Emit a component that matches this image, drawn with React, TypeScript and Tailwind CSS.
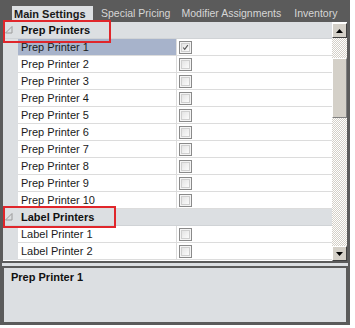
import React from "react";

const font = "font-['Liberation_Sans',Arial,sans-serif]";

function Checkbox({ checked }: { checked?: boolean }) {
  return (
    <div className="w-[13px] h-[13px] border border-[#8a8a8a] bg-[#f4f4f4] p-[1px]">
      <div className="w-full h-full border border-[#cfcfcf] bg-gradient-to-br from-[#e4e4e4] to-[#fbfbfb] relative">
        {checked && (
          <svg viewBox="0 0 9 9" className="absolute inset-0 w-full h-full">
            <path d="M1.5 4.5 L3.5 7 L7.5 1.5" fill="none" stroke="#555" strokeWidth="1.4" />
          </svg>
        )}
      </div>
    </div>
  );
}

function Header({ label }: { label: string }) {
  return (
    <div className="flex h-[17px] items-center bg-[#dcdfe2] border-b border-[#d0d3d6]">
      <svg width="8" height="8" viewBox="0 0 8 8" className="ml-[2px] mr-[8px]">
        <path d="M7 0.5 L7 7 L0.5 7 Z" fill="none" stroke="#9a9a9a" strokeWidth="1" />
      </svg>
      <span className="text-[11px] font-bold text-[#111]">{label}</span>
    </div>
  );
}

function Row({ label, selected, checked }: { label: string; selected?: boolean; checked?: boolean }) {
  return (
    <div className="flex h-[17px]">
      <div className="w-[15px] bg-[#dcdfe2]" />
      <div
        className={`w-[159px] border-r border-b border-[#dcdcdc] pl-[3px] flex items-center text-[11px] text-[#1a1a1a] ${
          selected ? "bg-[#a7b3cb]" : "bg-white"
        }`}
      >
        {label}
      </div>
      <div className="flex-1 bg-white border-b border-[#dcdcdc] flex items-center pl-[2px]">
        <Checkbox checked={checked} />
      </div>
    </div>
  );
}

function ScrollButton({ down }: { down?: boolean }) {
  return (
    <div className="w-[15px] h-[15px] bg-[#d4d0c8] border border-t-white border-l-white border-r-[#404040] border-b-[#404040] flex items-center justify-center">
      <svg width="7" height="4" viewBox="0 0 7 4">
        {down ? <path d="M0 0 L7 0 L3.5 4 Z" fill="#000" /> : <path d="M0 4 L7 4 L3.5 0 Z" fill="#000" />}
      </svg>
    </div>
  );
}

export default function App() {
  const checker =
    "bg-[repeating-conic-gradient(#d4d0c8_0_25%,#ffffff_0_50%)] bg-[length:2px_2px]";
  return (
    <div className={`${font} w-[355px] h-[328px] bg-white relative`}>
      <div className="w-[350px] h-[325px] bg-[#5b5b5b] flex flex-col">
        {/* Tabs */}
        <div className="h-[22px] flex items-end text-[10.5px] shrink-0">
          <div className="ml-[12px] h-[16px] w-[81px] bg-[#dcdfe2] pl-[2px] flex items-center font-bold text-[11px] text-[#1a1a1a]">
            Main Settings
          </div>
          <div className="ml-[8px] h-[16px] flex items-center text-[#d6d6d6]">Special Pricing</div>
          <div className="ml-[11px] h-[16px] flex items-center text-[#d6d6d6]">Modifier Assignments</div>
          <div className="ml-[13px] h-[16px] flex items-center text-[#d6d6d6]">Inventory</div>
        </div>
        {/* Grid */}
        <div className="flex ml-[3px] mr-[3px] h-[239px] shrink-0 overflow-hidden">
          <div className="w-[329px] flex flex-col bg-white">
            <Header label="Prep Printers" />
            <Row label="Prep Printer 1" selected checked />
            {[2, 3, 4, 5, 6, 7, 8, 9, 10].map((n) => (
              <Row key={n} label={`Prep Printer ${n}`} />
            ))}
            <Header label="Label Printers" />
            <Row label="Label Printer 1" />
            <Row label="Label Printer 2" />
          </div>
          <div className="w-[15px] flex flex-col bg-white">
            <div className="h-[1px]" />
            <ScrollButton />
            <div className={`h-[20px] ${checker}`} />
            <div className="h-[60px] bg-[#d4d0c8] border border-t-white border-l-white border-r-[#808080] border-b-[#808080]" />
            <div className={`flex-1 ${checker}`} />
            <ScrollButton down />
          </div>
        </div>
        {/* splitter */}
        <div className="h-[2px] shrink-0" />
        <div className="h-[3px] bg-[#dcdfe2] mx-[2px] shrink-0" />
        {/* bottom panel */}
        <div className="mx-[2px] mb-[1px] flex-1 border-2 border-[#5b5b5b] bg-[#dcdfe2] px-[7px] pt-[1px] text-[11px] leading-[16px] font-bold text-[#111]">
          Prep Printer 1
        </div>
      </div>
      {/* annotation rectangles */}
      <div className="absolute left-[3px] top-[20px] w-[108px] h-[23px] border-2 border-[#e0262b]" />
      <div className="absolute left-[3px] top-[206px] w-[113px] h-[22px] border-2 border-[#e0262b]" />
    </div>
  );
}
